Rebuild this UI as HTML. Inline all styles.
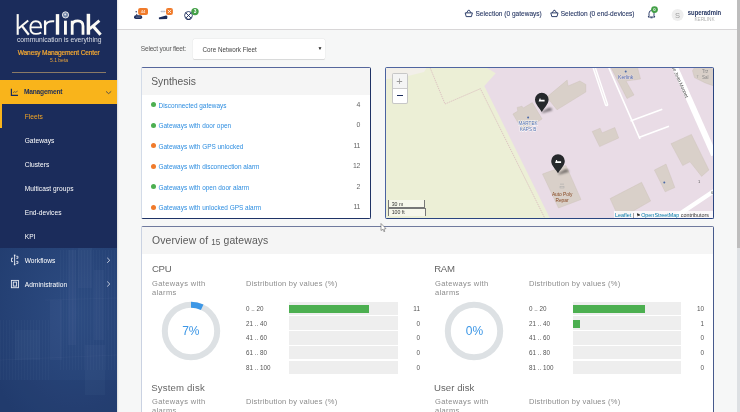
<!DOCTYPE html>
<html><head><meta charset="utf-8">
<style>
*{margin:0;padding:0;box-sizing:border-box}
#wrap{position:absolute;left:0;top:0;width:740px;height:412px;will-change:transform}
html,body{width:740px;height:412px;overflow:hidden;background:#f6f7f7;font-family:"Liberation Sans",sans-serif;position:relative}
.a{position:absolute;white-space:nowrap}
#sb{position:absolute;left:0;top:0;width:117px;height:412px;background:#1b2c5b;overflow:hidden}
#sbtex{position:absolute;left:0;top:248px;width:117px;height:164px;background:#213a6d}
.nav{position:absolute;left:24.7px;font-size:6.6px;letter-spacing:0.05px;color:#fff;height:10px;line-height:10px;white-space:nowrap}
#top{position:absolute;left:117px;top:0;width:620px;height:30px;background:#fff;border-bottom:1px solid #d8d6d7}
#thumb{position:absolute;left:737px;top:0;width:3px;height:248px;background:#bdbdbd}
#track{position:absolute;left:737px;top:248px;width:3px;height:164px;background:#dde0e3}
.panel{position:absolute;background:#fff;border:1px solid #aab3c8;border-right:1px solid #1e2f5f;border-bottom:1px solid #1e2f5f;border-radius:2px;overflow:hidden}
.ph{position:absolute;left:0;top:0;right:0;background:#f5f5f5}
.ttl{position:absolute;font-size:10.3px;color:#5a5a5a;height:12px;line-height:12px;white-space:nowrap}
.si{position:absolute;left:16.5px;font-size:6.45px;color:#2d8de0;height:10px;line-height:10px;white-space:nowrap}
.dot{position:absolute;left:8.5px;width:5px;height:5px;border-radius:50%}
.num{position:absolute;left:179.2px;width:39px;font-size:6.9px;letter-spacing:-0.3px;padding-right:0.1px;color:#666;height:10px;line-height:10px;text-align:right}
.sec{position:absolute;font-size:9.6px;color:#666;letter-spacing:0.16px;height:12px;line-height:12px;white-space:nowrap}
.sub{position:absolute;font-size:7.5px;color:#8c8c8c;line-height:9.4px;letter-spacing:0.37px}
.dist{position:absolute;font-size:7.5px;color:#8c8c8c;line-height:10px;letter-spacing:0.25px;white-space:nowrap}
.lbl{position:absolute;font-size:6.3px;color:#555;height:10px;line-height:10px;white-space:nowrap}
.val{position:absolute;width:30px;font-size:6.4px;color:#555;height:10px;line-height:10px;text-align:right}
.bar{position:absolute;background:#eeeeee;height:13.3px}
.g{position:absolute;background:#4caf50;height:8px}
.pct{position:absolute;font-size:12px;color:#3d97e6;line-height:14px;text-align:center;width:40px}
</style></head><body><div id="wrap">
<div id="sb">
  <svg class="a" style="left:0;top:248px" width="117" height="164" viewBox="0 248 117 164">
 <defs>
  <radialGradient id="rg" cx="0.65" cy="0.4" r="0.8">
   <stop offset="0" stop-color="#2d4c82"/>
   <stop offset="1" stop-color="#223d70"/>
  </radialGradient>
  <pattern id="vl" width="3" height="4" patternUnits="userSpaceOnUse">
   <rect width="3" height="4" fill="none"/>
   <rect x="0" y="0" width="1" height="4" fill="rgba(255,255,255,0.018)"/>
  </pattern>
 </defs>
 <rect x="0" y="248" width="117" height="164" fill="url(#rg)"/>
 <g fill="rgba(170,195,230,0.045)">
  <rect x="68" y="250" width="8" height="95"/>
  <rect x="78" y="248" width="14" height="40"/>
  <rect x="50" y="300" width="12" height="60"/>
  <rect x="94" y="270" width="10" height="70"/>
  <rect x="15" y="330" width="25" height="30"/>
  <rect x="85" y="345" width="20" height="50"/>
 </g>
 <g fill="url(#vl)">
  <rect x="60" y="250" width="57" height="120"/>
  <rect x="0" y="320" width="50" height="60"/>
 </g>
 <g stroke="rgba(190,210,240,0.07)" stroke-width="0.5">
  <line x1="73" y1="248" x2="73" y2="340"/>
  <line x1="108" y1="255" x2="108" y2="330"/>
  <line x1="45" y1="300" x2="117" y2="298"/>
  <line x1="0" y1="360" x2="117" y2="355"/>
 </g>
 <rect x="0" y="380" width="117" height="32" fill="rgba(20,40,80,0.08)"/>
</svg>

  <svg class="a" style="left:0;top:0" width="117" height="46" viewBox="0 0 117 46">
 <g stroke="#fbfaf5" fill="none" stroke-linecap="butt">
  <path d="M17.7,14.1 V34.8" stroke-width="2.1"/>
  <path d="M18.5,28.6 L28.2,20.4" stroke-width="2"/>
  <path d="M21.8,25.8 L28.8,34.8" stroke-width="2.2"/>
  <path d="M30.4,27.4 H41.1 C41.1,23.3 39,21.3 35.8,21.3 C32.2,21.3 30.4,24 30.4,27.9 C30.4,31.9 32.4,33.9 36,33.9 C38.1,33.9 39.7,33.4 41.2,32.6" stroke-width="1.9"/>
  <path d="M45.1,20.4 V34.8" stroke-width="2.3"/>
  <path d="M45.1,25.2 C46.5,22.2 49.5,20.9 54.2,21.3" stroke-width="2"/>
  <path d="M57.5,14.1 V34.7" stroke-width="3.4"/>
  <path d="M65.45,20.7 V34.7" stroke-width="2.9"/>
  <path d="M72.2,34.7 V20.7 M72.2,25 C72.5,22 74.8,20.8 77.8,20.8 C81.4,20.8 83,22.6 83,26 V34.7" stroke-width="2.8"/>
  <path d="M88.4,13.8 V34.7" stroke-width="3.5"/>
  <path d="M89.6,28.8 L99.4,20.6" stroke-width="2.9"/>
  <path d="M92.8,25.9 L100.6,34.7" stroke-width="3.1"/>
 </g>
 <circle cx="65.5" cy="14.9" r="3.1" fill="#7285a8" stroke="#f4f4f2" stroke-width="0.9"/>
 <circle cx="65.2" cy="14.6" r="1" fill="#dfe3ea"/>
</svg>

  <div class="a" style="left:17px;top:35px;font-size:6.75px;color:#d9dde6;line-height:9px;letter-spacing:-0.03px">communication is everything</div>
  <div class="a" style="left:17.8px;top:48.3px;font-size:6.6px;color:#f3a832;-webkit-text-stroke:0.2px #f3a832;line-height:9px;letter-spacing:-0.16px">Wanesy Management Center</div>
  <div class="a" style="left:50px;top:56px;font-size:5px;color:#eaa43a;line-height:8px">5.1 beta</div>
  <div class="a" style="left:12px;top:72px;width:94px;height:1px;background:#8a7a66"></div>
  <div class="a" style="left:0;top:80px;width:117px;height:24px;background:#f9b41b"></div>
  <div class="nav" style="left:24.1px;top:87px;color:#1b2c5b;font-weight:bold;font-size:6.6px;letter-spacing:-0.22px">Management</div>
  <div class="a" style="left:0;top:104px;width:1.5px;height:24px;background:#f9b41b"></div>
  <div class="nav" style="top:111.6px;color:#f5a623">Fleets</div>
  <div class="nav" style="top:135.6px">Gateways</div>
  <div class="nav" style="top:159.6px">Clusters</div>
  <div class="nav" style="top:183.6px">Multicast groups</div>
  <div class="nav" style="top:207.6px">End-devices</div>
  <div class="nav" style="top:231.6px">KPI</div>
  <div class="nav" style="top:255.6px">Workflows</div>
  <div class="nav" style="top:279.6px">Administration</div>
</div>

<div id="top"></div>
<div id="thumb"></div><div id="track"></div>

<div class="a" style="left:140.8px;top:44.3px;font-size:6.6px;color:#5a5a5a;line-height:10px;letter-spacing:-0.22px">Select your fleet:</div>
<div class="a" style="left:192.8px;top:39.4px;width:131.8px;height:19.2px;background:#fff;border-radius:1.5px;box-shadow:0 0 0 0.4px rgba(0,0,0,.06),0 0.6px 0.8px rgba(0,0,0,.10)"></div>
<div class="a" style="left:202.5px;top:44.5px;font-size:6.3px;color:#444;line-height:10px">Core Network Fleet</div>
<div class="a" style="left:317.5px;top:44px;font-size:5px;color:#222;line-height:8px">&#9660;</div>

<div class="panel" style="left:141px;top:67px;width:230px;height:152px;border-color:#56679c #1f3366 #1f3366 #d3dbe8">
  <div class="ph" style="height:27px"></div>
  <div class="ttl" style="left:9.2px;top:8px">Synthesis</div>
  <div class="dot" style="top:34.3px;background:#4caf50"></div><div class="si" style="top:32.7px">Disconnected gateways</div><div class="num" style="top:31.8px">4</div>
  <div class="dot" style="top:54.8px;background:#4caf50"></div><div class="si" style="top:53.2px">Gateways with door open</div><div class="num" style="top:52.3px">0</div>
  <div class="dot" style="top:75.3px;background:#f07b2b"></div><div class="si" style="top:73.7px">Gateways with GPS unlocked</div><div class="num" style="top:72.8px">11</div>
  <div class="dot" style="top:95.8px;background:#f07b2b"></div><div class="si" style="top:94.2px">Gateways with disconnection alarm</div><div class="num" style="top:93.3px">12</div>
  <div class="dot" style="top:116.3px;background:#4caf50"></div><div class="si" style="top:114.7px">Gateways with open door alarm</div><div class="num" style="top:113.8px">2</div>
  <div class="dot" style="top:136.8px;background:#f07b2b"></div><div class="si" style="top:135.2px">Gateways with unlocked GPS alarm</div><div class="num" style="top:134.3px">11</div>
</div>

<div class="panel" style="left:385px;top:67px;width:329px;height:152px;border-color:#4f65a0 #2a4580 #2a4580 #4a62a0">
<svg width="328" height="151" viewBox="386 68 328 151" style="position:absolute;left:0;top:0">
 <defs><filter id="blr" x="-50%" y="-50%" width="200%" height="200%"><feGaussianBlur stdDeviation="0.8"/></filter></defs>
 <rect x="386" y="68" width="328" height="151" fill="#ecefd6"/>
 <polygon points="485.5,67 495.7,73.3 484.3,86 550.3,219 714,219 714,67" fill="#e9dce6"/>
 <polygon points="385,67 427,67 424,72 410,75.5 395,78 385,79.5" fill="#f2efe9"/>
 <polyline points="430,67.5 445,104 480.4,88.7 545.2,219" fill="none" stroke="#d3aab6" stroke-width="0.65" stroke-dasharray="1.3,0.9"/>
 <g fill="#d9d0c9" stroke="#cbbfb6" stroke-width="0.4">
  <polygon points="512.9,114.1 517.8,111.1 517.2,107.4 522,106.2 523.2,108 532.3,102.6 542.1,119 522.7,130.5"/>
  <polygon points="546.8,97.1 567.2,80.1 568,86 579.9,81 585.8,84.4 585.8,92 557,109.8"/>
  <polygon points="611,67.5 637.5,67.5 640.5,79 626,81 634,95 627,98.5"/>
  <polygon points="694.5,67.5 714,67.5 714,86 704.7,82.7 694.5,77.6 692.5,70.8"/>
  <polygon points="592.2,131.5 600.1,128.2 602,132.9 614.8,127.5 618.7,138 599.6,146.6"/>
  <polygon points="542.5,174 566,165.5 581,199.5 558.5,208"/>
  <polygon points="610.1,198.6 641.6,182.3 650.6,201 619.4,219"/>
  <polygon points="671,143.7 691.4,134.4 708.9,170 701.6,176.4 690,161.8 682.7,165.6"/>
  <polygon points="654.4,170 666,164.1 671,177.3 674.8,187.5 665.2,191.8"/>
 </g>
 <g stroke="#fff" fill="none" stroke-linecap="butt">
  <line x1="594" y1="67" x2="606.5" y2="104.5" stroke="#fff" stroke-width="3.6" stroke-linecap="round"/>
  <line x1="594" y1="67" x2="606.5" y2="104.5" stroke="#e2d4dc" stroke-width="0.5"/>
  <line x1="608.5" y1="67" x2="640" y2="139" stroke-width="1.6"/>
  <polyline points="630.5,121 662.3,109.3" stroke-width="1.6"/>
  <polyline points="638.8,137.5 669,126.2" stroke-width="1.6"/>
  <polyline points="674.9,67 714,155" stroke-width="6"/>
  <polyline points="672,219 714,191" stroke-width="4.5"/>
 </g>
 <g font-family="Liberation Sans" font-size="4.6" fill="#4d6aa8" text-anchor="middle">
  <circle cx="528.1" cy="117.4" r="1" fill="#4d6aa8"/>
  <text x="528" y="125.3" stroke="#fff" stroke-width="0.8" paint-order="stroke">MARTEK</text>
  <text x="528" y="131" stroke="#fff" stroke-width="0.8" paint-order="stroke">KAPS B</text>
  <circle cx="625.7" cy="71.5" r="1" fill="#4d6aa8"/>
  <text x="625.7" y="78.5" font-size="5" stroke="#e9dce6" stroke-width="0.6" paint-order="stroke">Kerlink</text>
  <circle cx="664.3" cy="182.5" r="1" fill="#4d6aa8"/>
 </g>
 <g font-family="Liberation Sans" font-size="4.8" fill="#864620" text-anchor="middle">
  <text x="562.2" y="196">Auto Poly</text>
  <text x="562" y="201.6">Repar</text>
  <rect x="560" y="183.8" width="4" height="0.6" fill="#aaa"/>
  <rect x="560" y="186.4" width="4" height="1.6" fill="none" stroke="#aaa" stroke-width="0.5"/>
 </g>
 <g font-family="Liberation Sans" font-size="4.5" fill="#555">
  <text x="0" y="0" font-size="4.8" fill="#444" transform="translate(670.2,63.6) rotate(66)">Rue Jean Monnet</text>
  <text x="698" y="182.5" font-size="4">1</text>
  <text x="711" y="193.5" font-size="4">6</text>
  <text x="702" y="72.6" fill="#888">Trz</text><text x="696.5" y="77.5" fill="#999" font-size="3.5">7</text>
  <text x="702" y="79.2" fill="#888">Sal</text>
 </g>
 <!-- markers -->
 <g>
  <path d="M541.5,112 L549,107.5 Q553,108 552,110.5 L543,113 Z" fill="rgba(0,0,0,0.45)" filter="url(#blr)"/>
  <path d="M541.8,112 C540.0,108.8 535.0,104.19999999999999 535.0,99.6 A6.8,6.8 0 1 1 548.5999999999999,99.6 C548.5999999999999,104.19999999999999 543.5999999999999,108.8 541.8,112 Z" fill="#26292c"/>
  <path d="M538.6,101.5 h6 v-1.8 h-4 v-1.2 h-1 Z" fill="#fff"/>
  <path d="M558,173.5 L565.5,169 Q569.5,169.5 568.5,172 L559.5,174.5 Z" fill="rgba(0,0,0,0.45)" filter="url(#blr)"/>
  <path d="M558,173.2 C556.2,170.0 551.2,165.6 551.2,161 A6.8,6.8 0 1 1 564.8,161 C564.8,165.6 559.8,170.0 558,173.2 Z" fill="#26292c"/>
  <path d="M555.1,163 h6 v-1.8 h-4 v-1.2 h-1 Z" fill="#fff"/>
 </g>
</svg>
  <div class="a" style="left:5.5px;top:4.5px;width:16px;height:31px;border:1px solid rgba(0,0,0,.22);border-radius:2px;background:#fff;overflow:hidden">
    <div class="a" style="left:0;top:0;width:14px;height:15px;background:#f4f4f4;border-bottom:0.5px solid #ccc"></div>
    <div class="a" style="left:0;top:1px;width:14px;text-align:center;font-size:11px;line-height:13px;color:#999">+</div>
    <div class="a" style="left:4px;top:21.5px;width:6px;height:1.3px;background:#1b2c5b"></div>
  </div>
  <div class="a" style="left:1.5px;top:131.6px;width:37px;height:8.5px;border:1px solid #777;border-top:none;background:rgba(255,255,255,.5);font-size:5.2px;line-height:8px;color:#333;padding-left:3.2px">30 m</div>
  <div class="a" style="left:1.5px;top:140.1px;width:38px;height:7.8px;border:1px solid #777;border-bottom:none;background:rgba(255,255,255,.5);font-size:5.2px;line-height:7.5px;color:#333;padding-left:3.2px">100 ft</div>
  <div class="a" style="left:227.5px;top:143px;width:101px;height:8px;background:rgba(255,255,255,.8);font-size:5.42px;line-height:8px;color:#333;padding-left:1.5px"><span style="color:#0078a8">Leaflet</span> | &#9873; <span style="color:#0078a8">OpenStreetMap</span> contributors</div>
</div>

<div class="panel" style="left:141px;top:226px;width:573px;height:200px;border-color:#707a9e #465a8c #465a8c #cad2e2">
  <div class="ph" style="height:27px"></div>
  <div class="ttl" style="left:10px;top:8px;font-size:10.4px;letter-spacing:0.12px">Overview of <span style="font-size:8.2px;position:relative;top:1px">15</span> gateways</div>

  <div class="sec" style="left:10px;top:36px;letter-spacing:-0.35px">CPU</div>
  <div class="sub" style="left:10px;top:52px">Gateways with<br>alarms</div>
  <div class="dist" style="left:104px;top:52px">Distribution by values (%)</div>
  <svg class="a" style="left:19.2px;top:73.5px" width="60" height="60" viewBox="0 0 60 60">
    <circle cx="30" cy="30" r="26.2" fill="none" stroke="#dde1e4" stroke-width="6"/>
    <path d="M30,3.8 A26.2,26.2 0 0 1 41.2,6.3" fill="none" stroke="#3d97e6" stroke-width="6"/>
  </svg>
  <div class="pct" style="left:28.8px;top:96.5px">7%</div>
  <div class="lbl" style="left:104px;top:76.5px">0 .. 20</div><div class="bar" style="left:146.6px;top:74.5px;width:109px"></div><div class="g" style="left:146.6px;top:78px;width:80px"></div><div class="val" style="left:248px;top:76.5px">11</div>
  <div class="lbl" style="left:104px;top:92px">21 .. 40</div><div class="bar" style="left:146.6px;top:89.4px;width:109px"></div><div class="val" style="left:248px;top:92px">0</div>
  <div class="lbl" style="left:104px;top:106.3px">41 .. 60</div><div class="bar" style="left:146.6px;top:104.3px;width:109px"></div><div class="val" style="left:248px;top:106.3px">0</div>
  <div class="lbl" style="left:104px;top:121.2px">61 .. 80</div><div class="bar" style="left:146.6px;top:119.2px;width:109px"></div><div class="val" style="left:248px;top:121.2px">0</div>
  <div class="lbl" style="left:104px;top:136.1px">81 .. 100</div><div class="bar" style="left:146.6px;top:134.1px;width:109px"></div><div class="val" style="left:248px;top:136.1px">0</div>

  <div class="sec" style="left:292.2px;top:36px;letter-spacing:-0.25px">RAM</div>
  <div class="sub" style="left:293px;top:52px">Gateways with<br>alarms</div>
  <div class="dist" style="left:387px;top:52px">Distribution by values (%)</div>
  <svg class="a" style="left:302.3px;top:73.5px" width="60" height="60" viewBox="0 0 60 60">
    <circle cx="30" cy="30" r="26.2" fill="none" stroke="#dde1e4" stroke-width="6"/>
  </svg>
  <div class="pct" style="left:312.4px;top:96.5px">0%</div>
  <div class="lbl" style="left:387px;top:76.5px">0 .. 20</div><div class="bar" style="left:431.1px;top:74.5px;width:108px"></div><div class="g" style="left:431.1px;top:78px;width:72px"></div><div class="val" style="left:532px;top:76.5px">10</div>
  <div class="lbl" style="left:387px;top:92px">21 .. 40</div><div class="bar" style="left:431.1px;top:89.4px;width:108px"></div><div class="g" style="left:431.1px;top:92.9px;width:7px"></div><div class="val" style="left:532px;top:92px">1</div>
  <div class="lbl" style="left:387px;top:106.3px">41 .. 60</div><div class="bar" style="left:431.1px;top:104.3px;width:108px"></div><div class="val" style="left:532px;top:106.3px">0</div>
  <div class="lbl" style="left:387px;top:121.2px">61 .. 80</div><div class="bar" style="left:431.1px;top:119.2px;width:108px"></div><div class="val" style="left:532px;top:121.2px">0</div>
  <div class="lbl" style="left:387px;top:136.1px">81 .. 100</div><div class="bar" style="left:431.1px;top:134.1px;width:108px"></div><div class="val" style="left:532px;top:136.1px">0</div>

  <div class="sec" style="left:9.2px;top:155px;letter-spacing:0.18px">System disk</div>
  <div class="sub" style="left:10px;top:170px">Gateways with<br>alarms</div>
  <div class="dist" style="left:104px;top:170px">Distribution by values (%)</div>
  <div class="sec" style="left:292px;top:155px;letter-spacing:0.05px">User disk</div>
  <div class="sub" style="left:293px;top:170px">Gateways with<br>alarms</div>
  <div class="dist" style="left:387px;top:170px">Distribution by values (%)</div>
</div>
<!-- header icons -->
<svg class="a" style="left:117px;top:0" width="620" height="29" viewBox="117 0 620 29">
 <g fill="#1b2c5b">
  <rect x="134" y="15.2" width="8.2" height="3.8" rx="1.8"/>
  <path d="M135.6,15.5 L136.8,13.8 L137.8,15.5 Z"/>
  <circle cx="136.2" cy="11.8" r="0.7"/>
 </g>
 <rect x="135.8" y="16.7" width="4.8" height="0.7" fill="#8e9ab5"/>
 <rect x="138.1" y="8" width="9.9" height="6.9" rx="2" fill="#f07b2b"/>
 <text x="143" y="13" font-family="Liberation Sans" font-size="4.2" fill="#fff" text-anchor="middle">44</text>
 <g fill="#1b2c5b">
  <path d="M158.9,17.5 L166,15.6 Q167.6,15.5 167.4,17.3 L167,19 L159.3,19.3 Q158.6,18.5 158.9,17.5Z"/>
 </g>
 <g stroke="#9aa4bb" stroke-width="0.6" fill="none"><path d="M161,11.5 h4 M162,10.5 l-1,1 l1,1 M164,12.5 l1,-1 l-1,-1"/></g>
 <rect x="166" y="8" width="6.9" height="6.9" rx="2" fill="#f07b2b"/>
 <path d="M167.9,9.9 l3.1,3.1 M171,9.9 l-3.1,3.1" stroke="#fff" stroke-width="0.8"/>
 <g fill="none" stroke="#1b2c5b" stroke-width="0.9">
  <circle cx="188.5" cy="15.4" r="3.9"/>
  <path d="M185.8,12.8 l5.4,5.4 M191.2,12.8 l-5.4,5.4"/>
  <path d="M186.5,19.5 h4"/>
 </g>
 <circle cx="195" cy="11.6" r="3.7" fill="#43a047"/>
 <text x="195" y="13.4" font-family="Liberation Sans" font-size="4.8" font-weight="bold" fill="#fff" text-anchor="middle">3</text>
 <!-- baskets -->
 <g fill="none" stroke="#1b2c5b" stroke-width="0.9" stroke-linejoin="round">
  <path d="M465.2,12.9 h7.2 l-1,3.7 h-5.2 z M466.6,12.9 l1.6,-2.6 h1.2 l1.6,2.6"/>
  <path d="M550.8,12.9 h7.2 l-1,3.7 h-5.2 z M552.2,12.9 l1.6,-2.6 h1.2 l1.6,2.6"/>
 </g>
 <text x="475.5" y="16.2" font-family="Liberation Sans" font-size="6.5" fill="#1b2c5b" stroke="#1b2c5b" stroke-width="0.08" textLength="66.3" lengthAdjust="spacingAndGlyphs">Selection (0 gateways)</text>
 <text x="560.7" y="16.2" font-family="Liberation Sans" font-size="6.5" fill="#1b2c5b" stroke="#1b2c5b" stroke-width="0.08" textLength="73.8" lengthAdjust="spacingAndGlyphs">Selection (0 end-devices)</text>
 <!-- bell -->
 <path d="M648,17 h7 l-1,-1.2 v-2.5 q0,-2.6 -2.5,-2.9 q-2.5,0.3 -2.5,2.9 v2.5 z" fill="none" stroke="#1b2c5b" stroke-width="0.9" stroke-linejoin="round"/>
 <path d="M650.5,17.8 h2" stroke="#1b2c5b" stroke-width="0.9"/>
 <circle cx="654.5" cy="9.6" r="3.4" fill="#43a047"/>
 <text x="654.5" y="11.2" font-family="Liberation Sans" font-size="4.3" font-weight="bold" fill="#fff" text-anchor="middle">0</text>
 <!-- avatar -->
 <circle cx="677.6" cy="14.9" r="6" fill="#eeeeee"/>
 <text x="677.6" y="17.6" font-family="Liberation Sans" font-size="7.5" fill="#a0a0a0" text-anchor="middle">S</text>
 <text x="687.8" y="14.8" font-family="Liberation Sans" font-size="6.4" font-weight="bold" fill="#1b2c5b" textLength="33.4" lengthAdjust="spacingAndGlyphs">superadmin</text>
 <text x="694.4" y="21" font-family="Liberation Sans" font-size="4.6" fill="#b0b0b0" textLength="20.2" lengthAdjust="spacingAndGlyphs">KERLINK</text>
</svg>
<!-- sidebar icons -->
<svg class="a" style="left:0;top:0" width="117" height="412" viewBox="0 0 117 412">
 <g fill="none" stroke="#1b2c5b" stroke-width="1.2">
  <path d="M11.4,88.7 V95.4 H18"/>
 </g>
 <path d="M13,92.7 l1.5,-1 l1.2,0.6 l2,-1.3" fill="none" stroke="#1b2c5b" stroke-width="0.6"/>
 <path d="M106,91.4 l2.6,2.2 l2.6,-2.2" fill="none" stroke="#1b2c5b" stroke-width="0.7"/>
 <g fill="none" stroke="#e6e9f0" stroke-width="0.9">
  <path d="M14.6,255.5 V264.5"/>
  <path d="M13,258.2 H11.5 V261.6 H13"/>
  <path d="M16.3,256.3 H17.9 V258.3 H16.3"/>
  <path d="M16.3,261.4 H17.9 V263.4 H16.3"/>
  <rect x="11.4" y="280.4" width="7.1" height="7.3"/>
  <rect x="13.3" y="282.1" width="3.3" height="4"/>
 </g>
 <rect x="13.9" y="254.6" width="1.5" height="1.5" fill="#e6e9f0"/>
 <rect x="13.9" y="263.7" width="1.5" height="1.5" fill="#e6e9f0"/>
 <g fill="none" stroke="#e6e9f0" stroke-width="0.8">
  <path d="M107.2,257.8 l2.6,2.5 l-2.6,2.5"/>
  <path d="M107.2,281.5 l2.6,2.5 l-2.6,2.5"/>
 </g>
</svg>
<!-- cursor -->
<svg class="a" style="left:379.5px;top:222.8px" width="10" height="12" viewBox="0 0 10 12">
 <path d="M1,0.5 L1,7.5 L2.7,6.3 L3.9,8.7 L4.8,8.3 L3.8,6 L6,5.6 Z" fill="#fff" stroke="#444" stroke-width="0.5" stroke-linejoin="round"/>
</svg>
<div class="a" style="left:117px;top:0;width:2px;height:412px;background:linear-gradient(to right,rgba(0,0,0,.10),rgba(0,0,0,0))"></div>
</div></body></html>
